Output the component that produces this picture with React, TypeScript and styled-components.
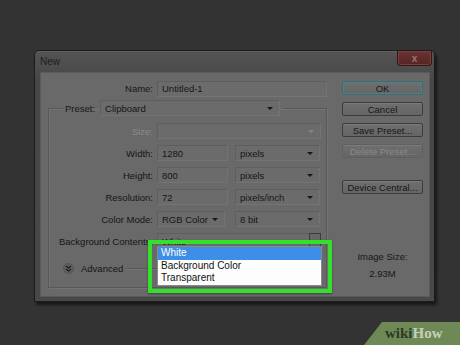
import React from "react";
import styled, { createGlobalStyle } from "styled-components";

const GlobalStyle = createGlobalStyle`
  html, body {
    margin: 0;
    padding: 0;
    background: #333333;
  }
  * {
    box-sizing: border-box;
  }
`;

const Screen = styled.div`
  position: relative;
  width: 460px;
  height: 345px;
  overflow: hidden;
  background: #333333;
  padding: 50px 0 0 34px;
  font-family: "Liberation Sans", Arial, sans-serif;
  font-size: 9.5px;
  color: #161616;
`;

const Dialog = styled.div`
  width: 401px;
  height: 252px;
  display: flex;
  flex-direction: column;
  background: linear-gradient(#545454, #474747 30px, #484848);
  border: 1px solid #1c1c1c;
  border-radius: 5px 5px 1px 1px;
  box-shadow: 2px 3px 3px rgba(0, 0, 0, 0.55), inset 0 1px 0 #626262;
`;

const TitleBar = styled.div`
  height: 21px;
  display: flex;
  align-items: flex-start;
  padding-left: 5px;
`;

const Title = styled.span`
  margin-top: 5px;
  font-size: 10px;
  color: #1e1e1e;
`;

const CloseButton = styled.div`
  margin-left: auto;
  margin-right: 2px;
  width: 35px;
  height: 15px;
  display: flex;
  align-items: center;
  justify-content: center;
  background: linear-gradient(#6c3434, #552222);
  border: 1px solid #351616;
  border-top: none;
  border-radius: 0 0 4px 4px;
  box-shadow: inset 0 0 0 1px #7a4040;
  color: #9a7474;
  font-size: 10px;
  font-weight: bold;
`;

const Panel = styled.div`
  flex: 1;
  margin: 0 4px 4px 5px;
  display: flex;
  background: #696969;
  border: 1px solid #5a5a5a;
`;

const LeftColumn = styled.div`
  width: 287px;
  padding-top: 7px;
  display: flex;
  flex-direction: column;
`;

const NameRow = styled.div`
  display: grid;
  grid-template-columns: 112px 170px;
  column-gap: 4px;
  align-items: center;
  height: 17px;
`;

const Label = styled.span<{ $disabled?: boolean }>`
  text-align: right;
  white-space: nowrap;
  color: ${(p) => (p.$disabled ? "#8c8c8c" : "#161616")};
`;

const Field = styled.div<{ $w: number }>`
  position: relative;
  width: ${(p) => p.$w}px;
  height: 16px;
  display: flex;
  align-items: center;
  padding-left: 4px;
  background: #6b6b6b;
  border: 1px solid #5e5e5e;
  border-bottom-color: #747474;
  border-right-color: #737373;
  white-space: nowrap;
`;

const Arrow = styled.span<{ $faint?: boolean }>`
  position: absolute;
  right: 6px;
  top: 6px;
  width: 0;
  height: 0;
  border-left: 3px solid transparent;
  border-right: 3px solid transparent;
  border-top: 3px solid ${(p) => (p.$faint ? "#858585" : "#161616")};
`;

const DropButton = styled.span`
  position: absolute;
  right: -1px;
  top: -1px;
  width: 12px;
  height: 15px;
  border: 1px solid #3c3c3c;
  background: #666;
  &::after {
    content: "";
    position: absolute;
    left: 3px;
    top: 6px;
    width: 5px;
    height: 1px;
    background: #2a2a2a;
  }
`;

const Group = styled.fieldset`
  margin: 4px 0 0 7px;
  padding: 0 0 12px 0;
  width: 279px;
  height: 187px;
  border: 1px solid #585858;
  box-shadow: 1px 1px 0 #737373, inset 1px 1px 0 #737373;
  min-width: 0;
`;

const Legend = styled.legend`
  margin-left: 15px;
  padding: 0 3px 0 1px;
  display: flex;
  align-items: center;
  gap: 5px;
  height: 14px;
`;

const Rows = styled.div`
  margin-top: 8px;
  display: grid;
  grid-template-columns: 104px auto;
  grid-auto-rows: 16px;
  row-gap: 6px;
  column-gap: 4px;
  align-items: center;
`;

const Fields = styled.div<{ $gap: number }>`
  display: flex;
  gap: ${(p) => p.$gap}px;
  position: relative;
`;

const Popup = styled.div`
  position: absolute;
  left: -9px;
  top: 7px;
  width: 184px;
  height: 53px;
  border: 4px solid #33e02c;
  padding: 2px 6px 3px 5px;
  box-shadow: 0 1px 2px rgba(0, 0, 0, 0.4);
  z-index: 2;
`;

const List = styled.ul`
  margin: 0;
  padding: 0;
  list-style: none;
  height: 40px;
  background: #fdfdfd;
  border: 1px solid #8a8a8a;
  font-size: 10px;
`;

const Option = styled.li<{ $selected?: boolean }>`
  height: 12.5px;
  line-height: 12.5px;
  padding-left: 3px;
  background: ${(p) => (p.$selected ? "#3c8ee6" : "transparent")};
  color: ${(p) => (p.$selected ? "#ffffff" : "#111111")};
`;

const AdvancedRow = styled.div`
  margin-top: 11px;
  height: 16px;
  display: flex;
  align-items: center;
  padding-left: 14px;
`;

const RoundButton = styled.span`
  width: 11px;
  height: 11px;
  border-radius: 50%;
  background: #5e5e5e;
  border: 1px solid #555;
  display: flex;
  align-items: center;
  justify-content: center;
`;

const AdvancedLabel = styled.span`
  margin-left: 7px;
`;

const Rule = styled.span`
  margin-left: 4px;
  flex: 1;
  height: 1px;
  margin-right: 6px;
  background: #575757;
  box-shadow: 0 1px 0 #747474;
`;

const RightColumn = styled.div`
  flex: 1;
  padding: 8px 0 0 14px;
  display: flex;
  flex-direction: column;
`;

const Button = styled.div<{ $primary?: boolean; $disabled?: boolean }>`
  width: 81px;
  height: 14px;
  margin-bottom: 7px;
  display: flex;
  align-items: center;
  justify-content: center;
  background: linear-gradient(#6f6f6f, #656565);
  border: 1px solid ${(p) => (p.$primary ? "#3b6e74" : p.$disabled ? "#606060" : "#3c3c3c")};
  border-radius: 2px;
  box-shadow: ${(p) => (p.$primary ? "inset 0 0 0 1px #4f8088" : "inset 0 1px 0 #7a7a7a")};
  color: ${(p) => (p.$disabled ? "#898989" : "#161616")};
`;

const Spacer = styled.div<{ $h: number }>`
  height: ${(p) => p.$h}px;
`;

const SizeInfo = styled.div`
  width: 81px;
  margin-top: 50px;
  display: flex;
  flex-direction: column;
  align-items: center;
  gap: 6px;
`;

const Watermark = styled.div`
  position: absolute;
  right: 0;
  bottom: 0;
  width: 96px;
  height: 23px;
  padding: 3px 0 0 21px;
  background: #6f8956;
  clip-path: polygon(18px 0, 100% 0, 100% 100%, 0 100%);
  font-family: "Liberation Serif", "Times New Roman", serif;
  font-weight: bold;
  font-size: 15px;
`;

const Wiki = styled.span`
  color: #2c3a24;
`;

const How = styled.span`
  color: #c6cfbc;
`;

const App: React.FC = () => {
  return (
    <Screen>
      <GlobalStyle />
      <Dialog>
        <TitleBar>
          <Title>New</Title>
          <CloseButton>x</CloseButton>
        </TitleBar>
        <Panel>
          <LeftColumn>
            <NameRow>
              <Label>Name:</Label>
              <Field $w={170}>Untitled-1</Field>
            </NameRow>
            <Group>
              <Legend>
                <Label>Preset:</Label>
                <Field $w={180}>
                  Clipboard
                  <Arrow />
                </Field>
              </Legend>
              <Rows>
                <Label $disabled>Size:</Label>
                <Fields $gap={0}>
                  <Field $w={164}>
                    <Arrow $faint />
                  </Field>
                </Fields>

                <Label>Width:</Label>
                <Fields $gap={7}>
                  <Field $w={71}>1280</Field>
                  <Field $w={85}>
                    pixels
                    <Arrow />
                  </Field>
                </Fields>

                <Label>Height:</Label>
                <Fields $gap={7}>
                  <Field $w={71}>800</Field>
                  <Field $w={85}>
                    pixels
                    <Arrow />
                  </Field>
                </Fields>

                <Label>Resolution:</Label>
                <Fields $gap={7}>
                  <Field $w={71}>72</Field>
                  <Field $w={85}>
                    pixels/inch
                    <Arrow />
                  </Field>
                </Fields>

                <Label>Color Mode:</Label>
                <Fields $gap={10}>
                  <Field $w={68}>
                    RGB Color
                    <Arrow />
                  </Field>
                  <Field $w={85}>
                    8 bit
                    <Arrow />
                  </Field>
                </Fields>

                <Label>Background Contents:</Label>
                <Fields $gap={0}>
                  <Field $w={164}>
                    White
                    <DropButton />
                  </Field>
                  <Popup>
                    <List>
                      <Option $selected>White</Option>
                      <Option>Background Color</Option>
                      <Option>Transparent</Option>
                    </List>
                  </Popup>
                </Fields>
              </Rows>
              <AdvancedRow>
                <RoundButton>
                  <svg width="7" height="7" viewBox="0 0 7 7">
                    <path d="M1 1 L3.5 3 L6 1 M1 4 L3.5 6 L6 4" fill="none" stroke="#1a1a1a" strokeWidth="1.1" />
                  </svg>
                </RoundButton>
                <AdvancedLabel>Advanced</AdvancedLabel>
                <Rule />
              </AdvancedRow>
            </Group>
          </LeftColumn>
          <RightColumn>
            <Button $primary>OK</Button>
            <Button>Cancel</Button>
            <Button>Save Preset...</Button>
            <Button $disabled>Delete Preset...</Button>
            <Spacer $h={15} />
            <Button>Device Central...</Button>
            <SizeInfo>
              <span>Image Size:</span>
              <span>2.93M</span>
            </SizeInfo>
          </RightColumn>
        </Panel>
      </Dialog>
      <Watermark>
        <Wiki>wiki</Wiki>
        <How>How</How>
      </Watermark>
    </Screen>
  );
};

export default App;
